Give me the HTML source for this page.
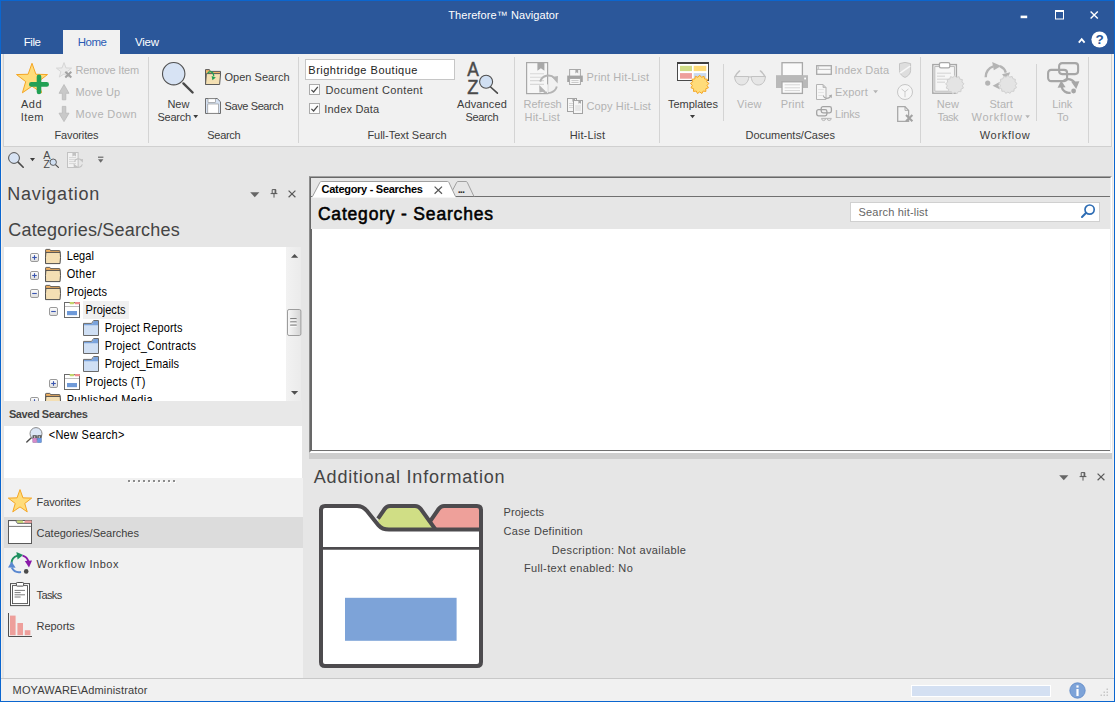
<!DOCTYPE html>
<html lang="en"><head><meta charset="utf-8"><title>Therefore™ Navigator</title>
<style>
html,body{margin:0;padding:0;background:#ffffff;}
body{width:1116px;height:703px;overflow:hidden;position:relative;font-family:"Liberation Sans",sans-serif;}
#root{position:absolute;left:0;top:0;width:1116px;height:703px;overflow:hidden;}
#root div,#root svg,#root span{position:absolute;box-sizing:border-box;}
.t{white-space:pre;}
svg{overflow:visible;}
</style></head><body><div id="root">
<div class="window" style="left:0px;top:0px;width:1115px;height:702px;background:#e6e6e6;border:1px solid #0b66cf;"></div>
<div class="titlebar" style="left:1px;top:1px;width:1113px;height:53px;background:#2b579a;"></div>
<div class="tab-home" style="left:63px;top:30px;width:57px;height:24px;background:#f1f1f1;"></div>
<div style="left:1px;top:54px;width:1px;height:647px;background:#f6f0ea;"></div>
<div style="left:1113px;top:54px;width:1px;height:647px;background:#f6f0ea;"></div>
<div style="left:2px;top:54px;width:1110px;height:93px;background:#e8e8e8;"></div>
<div class="ribbon" style="left:3px;top:54px;width:1109px;height:93px;background:#f1f1f1;border-left:1px solid #d2d2d2;border-right:1px solid #d2d2d2;border-bottom:1px solid #d0d0d0;"></div>
<div style="left:1112px;top:54px;width:1px;height:93px;background:#f6f0ea;"></div>
<div style="left:148px;top:57px;width:1px;height:86px;background:#d4d4d4;"></div>
<div style="left:298px;top:57px;width:1px;height:86px;background:#d4d4d4;"></div>
<div style="left:514px;top:57px;width:1px;height:86px;background:#d4d4d4;"></div>
<div style="left:659px;top:57px;width:1px;height:86px;background:#d4d4d4;"></div>
<div style="left:920px;top:57px;width:1px;height:86px;background:#d4d4d4;"></div>
<div style="left:1088px;top:57px;width:1px;height:86px;background:#d4d4d4;"></div>
<div style="left:723px;top:64px;width:1px;height:57px;background:#d4d4d4;"></div>
<div style="left:1036px;top:64px;width:1px;height:57px;background:#d4d4d4;"></div>
<div style="left:305px;top:59px;width:150px;height:21px;background:#ffffff;border:1px solid #c6c6c6;"></div>
<div class="tree" style="left:4px;top:247px;width:282px;height:154px;background:#ffffff;overflow:hidden;"><div style="left:79px;top:54px;width:46px;height:18px;background:#f0f0f0;"></div>
<svg class="exp" style="left:26px;top:6px" width="9" height="9" viewBox="0 0 9 9"><defs><linearGradient id="eg" x1="0" y1="0" x2="0" y2="1"><stop offset="0" stop-color="#ffffff"/><stop offset="1" stop-color="#dcdcdc"/></linearGradient></defs><rect x="0.5" y="0.5" width="8" height="8" rx="1.4" fill="url(#eg)" stroke="#9a9a9a"/><path d="M2.2 4.5H6.8" stroke="#3a55b0" stroke-width="1.1"/><path d="M4.5 2.2V6.8" stroke="#3a55b0" stroke-width="1.1"/></svg>
<svg class="folder" style="left:41px;top:2px" width="16" height="15" viewBox="0 0 16 15"><path d="M0.6 14.4V0.9Q0.6 0.4 1.2 0.4H4.6Q5.2 0.4 5.4 1L5.6 1.6H14.4Q15 1.6 15 2.2V4" fill="#f0b060" stroke="#4f4f4f" stroke-width="0.9"/><path d="M0.6 14.6Q0.2 8 0.9 3.4H15.2Q15.9 8 15 14.6Z" fill="#f4dfb4" stroke="#4f4f4f" stroke-width="1" stroke-linejoin="round"/></svg>
<svg class="exp" style="left:26px;top:24px" width="9" height="9" viewBox="0 0 9 9"><defs><linearGradient id="eg" x1="0" y1="0" x2="0" y2="1"><stop offset="0" stop-color="#ffffff"/><stop offset="1" stop-color="#dcdcdc"/></linearGradient></defs><rect x="0.5" y="0.5" width="8" height="8" rx="1.4" fill="url(#eg)" stroke="#9a9a9a"/><path d="M2.2 4.5H6.8" stroke="#3a55b0" stroke-width="1.1"/><path d="M4.5 2.2V6.8" stroke="#3a55b0" stroke-width="1.1"/></svg>
<svg class="folder" style="left:41px;top:20px" width="16" height="15" viewBox="0 0 16 15"><path d="M0.6 14.4V0.9Q0.6 0.4 1.2 0.4H4.6Q5.2 0.4 5.4 1L5.6 1.6H14.4Q15 1.6 15 2.2V4" fill="#f0b060" stroke="#4f4f4f" stroke-width="0.9"/><path d="M0.6 14.6Q0.2 8 0.9 3.4H15.2Q15.9 8 15 14.6Z" fill="#f4dfb4" stroke="#4f4f4f" stroke-width="1" stroke-linejoin="round"/></svg>
<svg class="exp" style="left:26px;top:42px" width="9" height="9" viewBox="0 0 9 9"><defs><linearGradient id="eg" x1="0" y1="0" x2="0" y2="1"><stop offset="0" stop-color="#ffffff"/><stop offset="1" stop-color="#dcdcdc"/></linearGradient></defs><rect x="0.5" y="0.5" width="8" height="8" rx="1.4" fill="url(#eg)" stroke="#9a9a9a"/><path d="M2.2 4.5H6.8" stroke="#3a55b0" stroke-width="1.1"/></svg>
<svg class="folder" style="left:41px;top:38px" width="16" height="15" viewBox="0 0 16 15"><path d="M0.6 14.4V0.9Q0.6 0.4 1.2 0.4H4.6Q5.2 0.4 5.4 1L5.6 1.6H14.4Q15 1.6 15 2.2V4" fill="#f0b060" stroke="#4f4f4f" stroke-width="0.9"/><path d="M0.6 14.6Q0.2 8 0.9 3.4H15.2Q15.9 8 15 14.6Z" fill="#f4dfb4" stroke="#4f4f4f" stroke-width="1" stroke-linejoin="round"/></svg>
<svg class="exp" style="left:26px;top:150px" width="9" height="9" viewBox="0 0 9 9"><defs><linearGradient id="eg" x1="0" y1="0" x2="0" y2="1"><stop offset="0" stop-color="#ffffff"/><stop offset="1" stop-color="#dcdcdc"/></linearGradient></defs><rect x="0.5" y="0.5" width="8" height="8" rx="1.4" fill="url(#eg)" stroke="#9a9a9a"/><path d="M2.2 4.5H6.8" stroke="#3a55b0" stroke-width="1.1"/><path d="M4.5 2.2V6.8" stroke="#3a55b0" stroke-width="1.1"/></svg>
<svg class="folder" style="left:41px;top:146px" width="16" height="15" viewBox="0 0 16 15"><path d="M0.6 14.4V0.9Q0.6 0.4 1.2 0.4H4.6Q5.2 0.4 5.4 1L5.6 1.6H14.4Q15 1.6 15 2.2V4" fill="#f0b060" stroke="#4f4f4f" stroke-width="0.9"/><path d="M0.6 14.6Q0.2 8 0.9 3.4H15.2Q15.9 8 15 14.6Z" fill="#f4dfb4" stroke="#4f4f4f" stroke-width="1" stroke-linejoin="round"/></svg>
<svg class="exp" style="left:45px;top:60px" width="9" height="9" viewBox="0 0 9 9"><defs><linearGradient id="eg" x1="0" y1="0" x2="0" y2="1"><stop offset="0" stop-color="#ffffff"/><stop offset="1" stop-color="#dcdcdc"/></linearGradient></defs><rect x="0.5" y="0.5" width="8" height="8" rx="1.4" fill="url(#eg)" stroke="#9a9a9a"/><path d="M2.2 4.5H6.8" stroke="#3a55b0" stroke-width="1.1"/></svg>
<svg class="case" style="left:60px;top:55px" width="16" height="16" viewBox="0 0 16 16"><rect x="0.5" y="0.5" width="15" height="15" fill="#ffffff" stroke="#6a6a6a"/><rect x="5.6" y="0" width="4.6" height="2.2" rx="0.8" fill="#c3d66e"/><rect x="10.6" y="0" width="5.4" height="2.2" rx="0.8" fill="#ee9090"/><path d="M1 4.5H15" stroke="#bdbdbd" stroke-width="1"/><rect x="3" y="9" width="10" height="4.2" fill="#6f9ad8"/></svg>
<svg class="exp" style="left:45px;top:132px" width="9" height="9" viewBox="0 0 9 9"><defs><linearGradient id="eg" x1="0" y1="0" x2="0" y2="1"><stop offset="0" stop-color="#ffffff"/><stop offset="1" stop-color="#dcdcdc"/></linearGradient></defs><rect x="0.5" y="0.5" width="8" height="8" rx="1.4" fill="url(#eg)" stroke="#9a9a9a"/><path d="M2.2 4.5H6.8" stroke="#3a55b0" stroke-width="1.1"/><path d="M4.5 2.2V6.8" stroke="#3a55b0" stroke-width="1.1"/></svg>
<svg class="case" style="left:60px;top:127px" width="16" height="16" viewBox="0 0 16 16"><rect x="0.5" y="0.5" width="15" height="15" fill="#ffffff" stroke="#6a6a6a"/><rect x="5.6" y="0" width="4.6" height="2.2" rx="0.8" fill="#c3d66e"/><rect x="10.6" y="0" width="5.4" height="2.2" rx="0.8" fill="#ee9090"/><path d="M1 4.5H15" stroke="#bdbdbd" stroke-width="1"/><rect x="3" y="9" width="10" height="4.2" fill="#6f9ad8"/></svg>
<svg class="cat" style="left:79px;top:73px" width="16" height="16" viewBox="0 0 16 16"><path d="M0.5 15.5V3.4H8.6L10.6 0.5H15.5V15.5Z" fill="#cfdff4" stroke="#6a6a6a" stroke-linejoin="round"/><path d="M1 3.9H8.9L10.9 1H15V5.2H1Z" fill="#7aa3dc"/></svg>
<svg class="cat" style="left:79px;top:91px" width="16" height="16" viewBox="0 0 16 16"><path d="M0.5 15.5V3.4H8.6L10.6 0.5H15.5V15.5Z" fill="#cfdff4" stroke="#6a6a6a" stroke-linejoin="round"/><path d="M1 3.9H8.9L10.9 1H15V5.2H1Z" fill="#7aa3dc"/></svg>
<svg class="cat" style="left:79px;top:109px" width="16" height="16" viewBox="0 0 16 16"><path d="M0.5 15.5V3.4H8.6L10.6 0.5H15.5V15.5Z" fill="#cfdff4" stroke="#6a6a6a" stroke-linejoin="round"/><path d="M1 3.9H8.9L10.9 1H15V5.2H1Z" fill="#7aa3dc"/></svg>
<span class="t" style="left:62.70px;top:3px;font-size:11px;line-height:12px;color:#000000;letter-spacing:0.08px;transform:scaleY(1.125);transform-origin:0 10px;">Legal</span>
<span class="t" style="left:62.70px;top:21px;font-size:11px;line-height:12px;color:#000000;letter-spacing:0.36px;transform:scaleY(1.125);transform-origin:0 10px;">Other</span>
<span class="t" style="left:62.70px;top:39px;font-size:11px;line-height:12px;color:#000000;letter-spacing:0.07px;transform:scaleY(1.125);transform-origin:0 10px;">Projects</span>
<span class="t" style="left:81.60px;top:57px;font-size:11px;line-height:12px;color:#000000;letter-spacing:0.02px;transform:scaleY(1.125);transform-origin:0 10px;">Projects</span>
<span class="t" style="left:100.70px;top:75px;font-size:11px;line-height:12px;color:#000000;letter-spacing:0.14px;transform:scaleY(1.125);transform-origin:0 10px;">Project Reports</span>
<span class="t" style="left:100.70px;top:93px;font-size:11px;line-height:12px;color:#000000;letter-spacing:0.25px;transform:scaleY(1.125);transform-origin:0 10px;">Project_Contracts</span>
<span class="t" style="left:100.70px;top:111px;font-size:11px;line-height:12px;color:#000000;letter-spacing:0.07px;transform:scaleY(1.125);transform-origin:0 10px;">Project_Emails</span>
<span class="t" style="left:81.60px;top:129px;font-size:11px;line-height:12px;color:#000000;letter-spacing:0.27px;transform:scaleY(1.125);transform-origin:0 10px;">Projects (T)</span>
<span class="t" style="left:62.70px;top:147px;font-size:11px;line-height:12px;color:#000000;letter-spacing:0.33px;transform:scaleY(1.125);transform-origin:0 10px;">Published Media</span>
</div>
<div class="vscroll" style="left:286px;top:247px;width:15px;height:154px;background:linear-gradient(90deg,#f2f2f2,#ebebeb);"></div>
<div style="left:4px;top:401px;width:298px;height:25px;background:#e8e8e8;"></div>
<div class="saved" style="left:4px;top:426px;width:298px;height:52px;background:#ffffff;"></div>
<div class="navbuttons" style="left:4px;top:478px;width:299px;height:200px;background:#f1f1f1;"></div>
<div style="left:4px;top:517px;width:299px;height:31px;background:#dcdcdc;"></div>
<div class="content" style="left:309px;top:176px;width:803px;height:277px;background:#ffffff;border-top:1px solid #a0a0a0;border-left:1px solid #8c8c8c;border-right:1px solid #ffffff;border-bottom:1px solid #ffffff;"></div>
<div style="left:310px;top:177px;width:801px;height:275px;background:#ffffff;border-top:1px solid #686868;border-left:1px solid #686868;border-right:1px solid #f0f0f0;border-bottom:1px solid #fbfbfb;"></div>
<div style="left:311px;top:178px;width:799px;height:51px;background:#e6e6e6;"></div>
<div style="left:311px;top:196px;width:799px;height:1px;background:#707070;"></div>
<div style="left:311px;top:229px;width:1px;height:222px;background:#686868;"></div>
<div style="left:311px;top:450px;width:799px;height:1px;background:#707070;"></div>
<div style="left:850px;top:202px;width:250px;height:20px;background:#ffffff;border:1px solid #d0d0d0;"></div>
<div style="left:309px;top:453px;width:803px;height:6px;background:#cdcdcd;"></div>
<div style="left:1px;top:678px;width:1113px;height:1px;background:#c8c8c8;"></div>
<div class="statusbar" style="left:1px;top:679px;width:1113px;height:22px;background:#f1f1f1;"></div>
<div style="left:911px;top:685px;width:140px;height:12px;background:#d4e0f2;border:1px solid #ffffff;"></div>
<svg class="ico-add" style="left:16px;top:62px" width="34" height="34" viewBox="0 0 34 34"><polygon points="16.00,1.30 19.88,12.26 31.50,12.56 22.28,19.64 25.58,30.79 16.00,24.20 6.42,30.79 9.72,19.64 0.50,12.56 12.12,12.26" fill="#ffdc7a" stroke="#f5a623" stroke-width="1" stroke-linejoin="miter"/><path d="M15.3 22.4H30.7M23 14.8V30" stroke="#21a055" stroke-width="4.6" stroke-linecap="round" fill="none"/></svg>
<svg style="left:56px;top:62px" width="17" height="17" viewBox="0 0 17 17"><polygon points="8.00,0.60 9.94,5.93 15.61,6.13 11.14,9.62 12.70,15.07 8.00,11.90 3.30,15.07 4.86,9.62 0.39,6.13 6.06,5.93" fill="#ebebeb" stroke="#d6d6d6" stroke-width="1"/><path d="M9.3 9.8L15.3 15.4M15.3 9.8L9.3 15.4" stroke="#a3a3a3" stroke-width="2.1" fill="none"/></svg>
<svg style="left:58px;top:84px" width="12" height="16" viewBox="0 0 12 16"><path d="M6 0.5L11 9.3H7.8V15.8H4.3V9.3H1Z" fill="#c9c9c9" stroke="#b9b9b9" stroke-width="0.8" stroke-linejoin="round"/></svg>
<svg style="left:58px;top:106px" width="12" height="16" viewBox="0 0 12 16"><path d="M6 15.6L11 7.2H7.8V0.4H4.3V7.2H1Z" fill="#c9c9c9" stroke="#b9b9b9" stroke-width="0.8" stroke-linejoin="round"/></svg>
<svg class="ico-search" style="left:160px;top:60px" width="36" height="36" viewBox="0 0 36 36"><line x1="23.4" y1="23.4" x2="32.6" y2="32.5" stroke="#4a4a4a" stroke-width="2.4" stroke-linecap="round"/><circle cx="13.7" cy="13.7" r="11.2" fill="#d7e3f4" stroke="#505050" stroke-width="1.1"/></svg>
<svg style="left:193px;top:115px" width="6" height="4" viewBox="0 0 6 4"><polygon points="0.3,0 5.1,0 2.6999999999999997,3.2" fill="#3c3c3c"/></svg>
<svg class="ico-open" style="left:205px;top:69px" width="17" height="17" viewBox="0 0 17 17"><path d="M0.5 15.5V0.6H4.4L5.4 2.4H15.5V6" fill="#f0b368" stroke="#5a5a5a" stroke-width="1" stroke-linejoin="round"/><path d="M0.5 15.5H14.6L15.6 4.6H1.4Z" fill="#f4e0b3" stroke="#5a5a5a" stroke-width="1" stroke-linejoin="round"/><path d="M2.6 4.6C4 1.8 8.4 1.8 8.8 7.2" fill="none" stroke="#21a055" stroke-width="1.2"/><polygon points="6.6,7 10.8,8.6 7.4,11.2" fill="#21a055"/></svg>
<svg class="ico-save" style="left:205px;top:98px" width="17" height="17" viewBox="0 0 17 17"><path d="M0.5 0.5H12.2L15.5 3.8V15.5H0.5Z" fill="#d6e2f3" stroke="#6e6e6e" stroke-width="1" stroke-linejoin="round"/><rect x="3" y="0.8" width="7.4" height="3.6" fill="#ffffff" stroke="#8a8a8a" stroke-width="0.6"/><rect x="2.8" y="6" width="10.6" height="9.2" fill="#ffffff" stroke="#8a8a8a" stroke-width="0.6"/></svg>
<svg class="chk" style="left:309px;top:84px" width="11" height="11" viewBox="0 0 11 11"><rect x="0.5" y="0.5" width="10" height="10" fill="#fdfdfd" stroke="#ababab"/><path d="M2.4 5.8L4.6 8L8.8 2.8" fill="none" stroke="#4a4a4a" stroke-width="1.2"/></svg>
<svg class="chk" style="left:309px;top:103px" width="11" height="11" viewBox="0 0 11 11"><rect x="0.5" y="0.5" width="10" height="10" fill="#fdfdfd" stroke="#ababab"/><path d="M2.4 5.8L4.6 8L8.8 2.8" fill="none" stroke="#4a4a4a" stroke-width="1.2"/></svg>
<svg class="ico-adv" style="left:466px;top:60px" width="34" height="36" viewBox="0 0 34 36"><text x="7" y="16.3" font-size="19.4" text-anchor="middle" fill="#4a4a4a" stroke="#4a4a4a" stroke-width="0.45" font-family="Liberation Sans, sans-serif" textLength="11.6" lengthAdjust="spacingAndGlyphs">A</text><text x="6.8" y="33.9" font-size="20.2" text-anchor="middle" fill="#4a4a4a" stroke="#4a4a4a" stroke-width="0.45" font-family="Liberation Sans, sans-serif" textLength="11.2" lengthAdjust="spacingAndGlyphs">Z</text><line x1="24.6" y1="27" x2="31.4" y2="33.2" stroke="#4a4a4a" stroke-width="1.6" stroke-linecap="round"/><circle cx="20.1" cy="21.7" r="6.5" fill="#d0dff2" stroke="#505050" stroke-width="1.1"/></svg>
<svg class="ico-refresh" style="left:526px;top:62px" width="34" height="33" viewBox="0 0 34 33"><rect x="0.6" y="0.6" width="21" height="31" fill="#f6f6f6" stroke="#a8a8a8" stroke-width="1.2"/><path d="M11.4 0.6H18.4V8.8L14.9 6.2L11.4 8.8Z" fill="#a8a8a8"/><path d="M4 11.7H18M4 15.2H18M4 18.6H18M4 22.4H18" stroke="#d8d8d8" stroke-width="1.1"/><path d="M14.2 19.6A8.6 8.6 0 0 1 28.6 16.2" fill="none" stroke="#b4b4b4" stroke-width="1.9"/><path d="M30.8 24.6A8.6 8.6 0 0 1 16.6 28.6" fill="none" stroke="#b4b4b4" stroke-width="1.9"/><path d="M21.6 22.4V31" stroke="#f0f0f0" stroke-width="1"/><polygon points="26,15 32,14 31.6,21.4" fill="#b4b4b4"/><polygon points="13.2,23 13.4,30.4 19.6,29.2" fill="#b4b4b4"/></svg>
<svg style="left:567px;top:69px" width="16" height="16" viewBox="0 0 16 16"><rect x="2.6" y="0.5" width="10.8" height="7" fill="#f6f6f6" stroke="#a8a8a8"/><path d="M8.4 0.5H11.2V4.4L9.8 3.3L8.4 4.4Z" fill="#a8a8a8"/><rect x="0.2" y="6.6" width="15.6" height="6.4" fill="#a3a3a3"/><rect x="2.6" y="9.5" width="10.8" height="6" fill="#f9f9f9" stroke="#a8a8a8"/><path d="M4.4 11.6H11.6M4.4 13.5H11.6" stroke="#c4c4c4" stroke-width="0.9"/></svg>
<svg style="left:567px;top:98px" width="16" height="16" viewBox="0 0 16 16"><rect x="0.5" y="0.5" width="9" height="13" fill="#f6f6f6" stroke="#a3a3a3"/><path d="M5.4 0.5H8V3.8L6.7 2.9L5.4 3.8Z" fill="#a8a8a8"/><path d="M2 5.5H6M2 7.5H6M2 9.5H6" stroke="#d4d4d4" stroke-width="0.9"/><rect x="6.5" y="2.5" width="9" height="13" fill="#f6f6f6" stroke="#a3a3a3"/><path d="M11.4 2.5H14V5.8L12.7 4.9L11.4 5.8Z" fill="#a8a8a8"/><path d="M8.2 8H13.8M8.2 10H13.8M8.2 12H13.8" stroke="#d4d4d4" stroke-width="0.9"/></svg>
<svg class="ico-templates" style="left:677px;top:62px" width="34" height="34" viewBox="0 0 34 34"><rect x="0.5" y="0.5" width="31" height="18" fill="#ffffff" stroke="#4a4a4a"/><rect x="0" y="0" width="32" height="2" fill="#3f3f3f"/><rect x="3" y="3.8" width="12" height="5.3" fill="#cfdc86"/><rect x="16.7" y="3.8" width="12.6" height="5.3" fill="#ffdb77"/><rect x="3" y="11.1" width="12" height="5.6" fill="#ee9f9b"/><rect x="16.7" y="11.1" width="12.6" height="5.6" fill="#c9daf0"/><polygon points="22.70,13.20 24.47,15.32 27.02,14.27 27.61,16.96 30.35,17.22 29.62,19.88 31.93,21.38 30.05,23.39 31.40,25.80 28.79,26.70 28.87,29.46 26.14,29.05 24.93,31.53 22.70,29.90 20.47,31.53 19.26,29.05 16.53,29.46 16.61,26.70 14.00,25.80 15.35,23.39 13.47,21.38 15.78,19.88 15.05,17.22 17.79,16.96 18.38,14.27 20.93,15.32" fill="#ffdc7a" stroke="#f5a623" stroke-width="1" stroke-linejoin="round"/></svg>
<svg style="left:690px;top:115px" width="6" height="4" viewBox="0 0 6 4"><polygon points="0,0 5,0 2.5,3.2" fill="#3c3c3c"/></svg>
<svg style="left:734px;top:70px" width="32" height="16" viewBox="0 0 32 16"><path d="M1 6.6Q2.6 3.4 5.6 0.9M31 6.6Q29.4 3.4 26.4 0.9" stroke="#c2c2c2" stroke-width="1.4" fill="none" stroke-linecap="round"/><path d="M0.6 6.5H14.8C14.6 11.6 11.8 15 7.7 15C3.6 15 0.8 11.6 0.6 6.5Z" fill="#e6e6e6" stroke="#c2c2c2"/><path d="M17.2 6.5H31.4C31.2 11.6 28.4 15 24.3 15C20.2 15 17.4 11.6 17.2 6.5Z" fill="#e6e6e6" stroke="#c2c2c2"/><path d="M14.6 7.2Q16 6.2 17.4 7.2" stroke="#c2c2c2" fill="none"/></svg>
<svg style="left:776px;top:62px" width="32" height="32" viewBox="0 0 32 32"><rect x="6" y="0.7" width="20.4" height="13.4" fill="#fafafa" stroke="#a8a8a8" stroke-width="1.3"/><rect x="0" y="13.2" width="32" height="12.8" fill="#b9b9b9"/><rect x="28.2" y="15.6" width="1.8" height="1.8" fill="#ffffff"/><rect x="6" y="19.8" width="20.4" height="11.6" fill="#fbfbfb" stroke="#a8a8a8" stroke-width="1.3"/><path d="M8.6 22.8H24M8.6 25.8H24M8.6 28.6H24" stroke="#d6d6d6" stroke-width="1"/></svg>
<svg style="left:816px;top:65px" width="16" height="10" viewBox="0 0 16 10"><rect x="0.7" y="0.7" width="14.6" height="8.6" fill="#f8f8f8" stroke="#a8a8a8" stroke-width="1.3"/><path d="M1 4.4H15" stroke="#b8b8b8" stroke-width="0.9"/><path d="M2.6 1.4V4" stroke="#b8b8b8" stroke-width="0.8"/></svg>
<svg style="left:816px;top:84px" width="16" height="16" viewBox="0 0 16 16"><path d="M0.5 0.5H7L10 3.5V15.5H0.5Z" fill="#f6f6f6" stroke="#b4b4b4"/><path d="M7 0.5V3.5H10" fill="#c8c8c8" stroke="#b4b4b4" stroke-width="0.8"/><path d="M2.2 5.5H7.8M2.2 8.5H7.8M2.2 11.5H6" stroke="#dcdcdc" stroke-width="0.7"/><path d="M7 11.4C8.4 15.2 12.4 15.2 14.6 12.4" fill="none" stroke="#a8a8a8" stroke-width="1.1"/><polygon points="12.8,11.6 16,10.4 15.6,14.2" fill="#a8a8a8"/></svg>
<svg style="left:816px;top:106px" width="16" height="16" viewBox="0 0 16 16"><rect x="5.2" y="0.7" width="10.2" height="6.2" rx="1.8" fill="none" stroke="#a3a3a3" stroke-width="1.3"/><rect x="0.7" y="3.6" width="10.2" height="6.2" rx="1.8" fill="none" stroke="#a3a3a3" stroke-width="1.3"/><path d="M5.4 12.4H15.4M5.6 12.4A2 2.2 0 0 0 9.6 12.4M11.2 12.4A2 2.2 0 0 0 15.2 12.4" fill="#e6e6e6" stroke="#b4b4b4" stroke-width="0.9"/></svg>
<svg style="left:873px;top:90px" width="6" height="4" viewBox="0 0 6 4"><polygon points="0.2,0.3 5.0,0.3 2.6,3.3" fill="#b4b4b4"/></svg>
<svg style="left:899px;top:62px" width="12" height="16" viewBox="0 0 12 16"><path d="M0.5 1.6L6 0.4L11.6 1.6V8.6C11.6 12 8.6 14.4 6 15.4C3.4 14.4 0.5 12 0.5 8.6Z" fill="#dedede" stroke="#c4c4c4"/><path d="M1 11.2L11.2 4.2" stroke="#f8f8f8" stroke-width="1.5"/></svg>
<svg style="left:897px;top:84px" width="16" height="16" viewBox="0 0 16 16"><circle cx="8" cy="8" r="7.5" fill="#f6f6f6" stroke="#c6c6c6"/><path d="M4.6 5L8 7.8L11.4 5M8 7.8V13.2" fill="none" stroke="#cccccc" stroke-width="1"/></svg>
<svg style="left:897px;top:106px" width="17" height="17" viewBox="0 0 17 17"><path d="M0.7 0.7H8L11.6 4.4V15.3H0.7Z" fill="#f4f4f4" stroke="#a8a8a8" stroke-width="1.3"/><path d="M8 0.7V4.4H11.6" fill="none" stroke="#a8a8a8" stroke-width="0.9"/><path d="M9 9L15.4 15.2M15.4 9L9 15.2" stroke="#a3a3a3" stroke-width="2.1" fill="none"/></svg>
<svg style="left:932px;top:62px" width="34" height="34" viewBox="0 0 34 34"><rect x="0.8" y="2.6" width="23.6" height="28.6" fill="#fbfbfb" stroke="#a8a8a8" stroke-width="1.4"/><rect x="2.8" y="4.6" width="19.6" height="24.6" fill="#f6f6f6" stroke="#b4b4b4" stroke-width="0.9"/><rect x="7.4" y="0.6" width="10.4" height="5.2" rx="1.6" fill="#ffffff" stroke="#a8a8a8" stroke-width="1.3"/><path d="M5 11.2H19M5 14.2H13M5 17.2H19M5 20.2H13" stroke="#dedede" stroke-width="1.6"/><polygon points="22.80,13.60 24.62,15.42 27.08,14.65 27.84,17.11 30.37,17.57 29.91,20.11 31.93,21.69 30.34,23.72 31.40,26.06 29.05,27.12 28.90,29.69 26.33,29.53 25.00,31.73 22.80,30.40 20.60,31.73 19.27,29.53 16.70,29.69 16.55,27.12 14.20,26.06 15.26,23.72 13.67,21.69 15.69,20.11 15.23,17.57 17.76,17.11 18.52,14.65 20.98,15.42" fill="#e4e4e4" stroke="#d0d0d0" stroke-width="1" stroke-linejoin="round"/></svg>
<svg style="left:984px;top:62px" width="34" height="34" viewBox="0 0 34 34"><path d="M1.7 15.2A10.6 10.6 0 0 1 9.4 4.4" fill="none" stroke="#b4b4b4" stroke-width="2.4"/><polygon points="8.2,0 17.2,4 9.8,8.2" fill="#b4b4b4"/><path d="M16 4.2A10.6 10.6 0 0 1 21.8 10.6" fill="none" stroke="#b4b4b4" stroke-width="2.4"/><polygon points="18,12.2 26.2,10.2 23,18" fill="#b4b4b4"/><circle cx="3.7" cy="21.1" r="2.6" fill="#b4b4b4"/><polygon points="8.6,23.8 16,19.8 14.4,23.8 16,27.6" fill="#b4b4b4"/><polygon points="23.90,13.40 25.72,15.12 28.13,14.44 28.94,16.81 31.39,17.33 31.01,19.81 32.93,21.40 31.44,23.42 32.41,25.73 30.15,26.82 29.93,29.31 27.43,29.23 26.08,31.34 23.90,30.10 21.72,31.34 20.37,29.23 17.87,29.31 17.65,26.82 15.39,25.73 16.36,23.42 14.87,21.40 16.79,19.81 16.41,17.33 18.86,16.81 19.67,14.44 22.08,15.12" fill="#e4e4e4" stroke="#d0d0d0" stroke-width="1" stroke-linejoin="round"/></svg>
<svg style="left:1025px;top:115px" width="6" height="4" viewBox="0 0 6 4"><polygon points="0.3,0.2 4.8999999999999995,0.2 2.5999999999999996,3.2" fill="#b4b4b4"/></svg>
<svg style="left:1047px;top:62px" width="34" height="34" viewBox="0 0 34 34"><rect x="12.1" y="1.1" width="19" height="11" rx="3" fill="none" stroke="#a6a6a6" stroke-width="2.1"/><rect x="1.1" y="7.9" width="19" height="11.2" rx="3" fill="none" stroke="#a6a6a6" stroke-width="2.1"/><path d="M16.6 18.8A7.4 7.4 0 0 1 28 21.6" fill="none" stroke="#a6a6a6" stroke-width="2.3"/><polygon points="24.2,19.8 32.4,19.2 29.2,27" fill="#a6a6a6"/><path d="M14.6 24.4A7.4 7.4 0 0 0 23.6 30.6" fill="none" stroke="#a6a6a6" stroke-width="2.3"/><polygon points="10.6,25.8 14.2,18.6 18.6,25.2" fill="#a6a6a6"/><circle cx="26.6" cy="29" r="2.4" fill="#a6a6a6"/></svg>
<svg style="left:1020px;top:15px" width="8" height="4" viewBox="0 0 8 4"><rect x="0.6" y="0.6" width="6.6" height="2.6" fill="#ffffff"/></svg>
<svg style="left:1055px;top:10px" width="9" height="10" viewBox="0 0 9 10"><rect x="0.5" y="1" width="8" height="8" fill="none" stroke="#ffffff"/><rect x="0" y="0" width="9" height="2" fill="#ffffff"/></svg>
<svg style="left:1090px;top:10.5px" width="9" height="8" viewBox="0 0 9 8"><path d="M0.6 0.4L7.8 7.4M7.8 0.4L0.6 7.4" stroke="#ffffff" stroke-width="1.4" fill="none"/></svg>
<svg style="left:1078px;top:37px" width="8" height="7" viewBox="0 0 8 7"><path d="M0.8 5.6L3.7 2.2L6.6 5.6" stroke="#ffffff" stroke-width="1.8" fill="none"/></svg>
<svg class="help" style="left:1091px;top:31px" width="17" height="17" viewBox="0 0 17 17"><circle cx="8.5" cy="8.5" r="8.1" fill="#ffffff"/><text x="8.6" y="13.4" font-size="13.5" font-weight="700" text-anchor="middle" fill="#2b579a" font-family="Liberation Sans, sans-serif">?</text></svg>
<svg style="left:8px;top:152px" width="16" height="16" viewBox="0 0 16 16"><line x1="9.6" y1="9.6" x2="15.2" y2="15.2" stroke="#4a4a4a" stroke-width="1.6" stroke-linecap="round"/><circle cx="6" cy="6" r="5.4" fill="#d7e3f4" stroke="#505050" stroke-width="1"/></svg>
<svg style="left:30px;top:158px" width="6" height="4" viewBox="0 0 6 4"><polygon points="0,0 5,0 2.5,3.2" fill="#3c3c3c"/></svg>
<svg style="left:43px;top:152px" width="16" height="16" viewBox="0 0 16 16"><text x="3.8" y="7.2" font-size="10.8" text-anchor="middle" fill="#4a4a4a" font-family="Liberation Sans, sans-serif">A</text><text x="3.6" y="15.8" font-size="10.4" text-anchor="middle" fill="#4a4a4a" font-family="Liberation Sans, sans-serif">Z</text><line x1="12.2" y1="12.4" x2="15.4" y2="15.4" stroke="#4a4a4a" stroke-width="1.2" stroke-linecap="round"/><circle cx="10.2" cy="10.2" r="3.2" fill="#d0dff2" stroke="#505050" stroke-width="0.9"/></svg>
<svg style="left:67px;top:152px" width="16" height="16" viewBox="0 0 16 16"><rect x="0.5" y="0.5" width="10.6" height="15" fill="#f2f2f2" stroke="#c2c2c2"/><path d="M5.4 0.5H9V4.6L7.2 3.4L5.4 4.6Z" fill="#c2c2c2"/><path d="M2 5.6H9M2 7.6H9M2 9.6H9M2 11.6H9" stroke="#d2d2d2" stroke-width="0.9"/><path d="M7.4 9.6A4.2 4.2 0 0 1 14.6 8.4" fill="none" stroke="#c2c2c2" stroke-width="1.1"/><path d="M15.4 12.4A4.2 4.2 0 0 1 8.4 14" fill="none" stroke="#c2c2c2" stroke-width="1.1"/><polygon points="12.8,7.4 16,7 15.8,10.8" fill="#c2c2c2"/><polygon points="6.6,11.4 6.8,15.4 10,14.6" fill="#c2c2c2"/></svg>
<svg style="left:98px;top:155.6px" width="6" height="8" viewBox="0 0 6 8"><rect x="0" y="0.6" width="5.4" height="1.2" fill="#6a6a6a"/><polygon points="0,3.2 5.4,3.2 2.7,6.800000000000001" fill="#6a6a6a"/></svg>
<svg style="left:250px;top:191.6px" width="10" height="6" viewBox="0 0 10 6"><polygon points="0.2,0.2 9.399999999999999,0.2 4.8,5.2" fill="#666666"/></svg>
<svg style="left:269.5px;top:189.2px" width="8" height="9" viewBox="0 0 8 9"><path d="M2.2 0.6H5.8V4.4H2.2ZM0.6 4.6H7.4M4 4.6V8.6" fill="none" stroke="#5a5a5a" stroke-width="1"/><path d="M5.2 0.6V4.4" stroke="#5a5a5a" stroke-width="1.2"/></svg>
<svg style="left:288px;top:190px" width="8" height="8" viewBox="0 0 8 8"><path d="M0.6 0.6L7.4 7.2M7.4 0.6L0.6 7.2" stroke="#5a5a5a" stroke-width="1.2" fill="none"/></svg>
<svg style="left:1058.8px;top:474.6px" width="10" height="6" viewBox="0 0 10 6"><polygon points="0.2,0.2 9.399999999999999,0.2 4.8,5.2" fill="#666666"/></svg>
<svg style="left:1078.6px;top:472.2px" width="8" height="9" viewBox="0 0 8 9"><path d="M2.2 0.6H5.8V4.4H2.2ZM0.6 4.6H7.4M4 4.6V8.6" fill="none" stroke="#5a5a5a" stroke-width="1"/><path d="M5.2 0.6V4.4" stroke="#5a5a5a" stroke-width="1.2"/></svg>
<svg style="left:1097px;top:473.2px" width="8" height="8" viewBox="0 0 8 8"><path d="M0.6 0.6L7.4 7.2M7.4 0.6L0.6 7.2" stroke="#5a5a5a" stroke-width="1.2" fill="none"/></svg>
<svg style="left:291px;top:254px" width="8" height="4" viewBox="0 0 8 4"><polygon points="0,3.8 3.6,0 7.2,3.8" fill="#505050"/></svg>
<svg style="left:291px;top:391px" width="8" height="4" viewBox="0 0 8 4"><polygon points="0,0 7.2,0 3.6,3.8" fill="#505050"/></svg>
<svg class="thumb" style="left:286.5px;top:309px" width="15" height="27" viewBox="0 0 15 27"><defs><linearGradient id="tg" x1="0" y1="0" x2="1" y2="0"><stop offset="0" stop-color="#f8f8f8"/><stop offset="1" stop-color="#d4d4d4"/></linearGradient></defs><rect x="0.5" y="0.5" width="13.4" height="26" rx="1.6" fill="url(#tg)" stroke="#9c9c9c"/><path d="M3.2 9.8H9.6M3.2 13H9.6M3.2 16.2H9.6" stroke="#555555" stroke-width="1"/><path d="M3.2 10.8H9.6M3.2 14H9.6M3.2 17.2H9.6" stroke="#ffffff" stroke-width="1"/></svg>
<svg style="left:26px;top:427px" width="17" height="17" viewBox="0 0 17 17"><line x1="0.8" y1="15" x2="5.6" y2="10.4" stroke="#4a4a4a" stroke-width="1.4" stroke-linecap="round"/><circle cx="10" cy="6.6" r="6" fill="#dbe6f5" stroke="#8a8a8a" stroke-width="1"/><rect x="6.8" y="11" width="4" height="4.6" fill="#d88acb" stroke="#9a72a6" stroke-width="0.5"/><rect x="11.4" y="11" width="4" height="4.6" fill="#6a9ae4" stroke="#5476ad" stroke-width="0.5"/><path d="M6.6 8.2H10.8V11H6.6ZM11.4 8.2H15.6V11H11.4Z" fill="#4a4a4a"/><rect x="7.8" y="9.4" width="1.6" height="1.2" fill="#ffffff"/><rect x="12.6" y="9.4" width="1.6" height="1.2" fill="#ffffff"/></svg>
<svg class="dots" style="left:128px;top:480px" width="50" height="4" viewBox="0 0 50 4"><rect x="1" y="1" width="2" height="2" fill="#ffffff"/><rect x="0" y="0" width="2" height="2" fill="#8c8c8c"/><rect x="6" y="1" width="2" height="2" fill="#ffffff"/><rect x="5" y="0" width="2" height="2" fill="#8c8c8c"/><rect x="11" y="1" width="2" height="2" fill="#ffffff"/><rect x="10" y="0" width="2" height="2" fill="#8c8c8c"/><rect x="16" y="1" width="2" height="2" fill="#ffffff"/><rect x="15" y="0" width="2" height="2" fill="#8c8c8c"/><rect x="21" y="1" width="2" height="2" fill="#ffffff"/><rect x="20" y="0" width="2" height="2" fill="#8c8c8c"/><rect x="26" y="1" width="2" height="2" fill="#ffffff"/><rect x="25" y="0" width="2" height="2" fill="#8c8c8c"/><rect x="31" y="1" width="2" height="2" fill="#ffffff"/><rect x="30" y="0" width="2" height="2" fill="#8c8c8c"/><rect x="36" y="1" width="2" height="2" fill="#ffffff"/><rect x="35" y="0" width="2" height="2" fill="#8c8c8c"/><rect x="41" y="1" width="2" height="2" fill="#ffffff"/><rect x="40" y="0" width="2" height="2" fill="#8c8c8c"/><rect x="46" y="1" width="2" height="2" fill="#ffffff"/><rect x="45" y="0" width="2" height="2" fill="#8c8c8c"/></svg>
<svg style="left:8px;top:489px" width="24" height="24" viewBox="0 0 24 24"><polygon points="12.00,0.60 14.94,8.85 23.70,9.10 16.76,14.45 19.23,22.85 12.00,17.90 4.77,22.85 7.24,14.45 0.30,9.10 9.06,8.85" fill="#ffdc7a" stroke="#f5a623" stroke-width="1"/></svg>
<svg style="left:8px;top:520px" width="24" height="24" viewBox="0 0 24 24"><rect x="0.5" y="0.5" width="23" height="23" fill="#ffffff" stroke="#5a5a5a"/><path d="M8.4 0.4H14.6L15.8 3H9.6Z" fill="#cbdc7c"/><path d="M17 0.4H23.6V3H16Z" fill="#f0a0a0"/><path d="M0.6 0.6H7.6L9.4 3.4H23.4" fill="none" stroke="#5a5a5a" stroke-width="0.9"/><path d="M1 6.4H23" stroke="#6a6a6a" stroke-width="0.9"/></svg>
<svg style="left:8px;top:552px" width="24" height="24" viewBox="0 0 24 24"><path d="M3.4 11.6A8.4 8.4 0 0 1 9.6 3.6" fill="none" stroke="#1f9060" stroke-width="2"/><polygon points="8.4,0 15.2,3 9.6,7.6" fill="#1f9060"/><path d="M14.6 3.6A8.4 8.4 0 0 1 20.4 9.4" fill="none" stroke="#8a1aa8" stroke-width="2"/><polygon points="16.8,9 24,8.6 21,15.4" fill="#8a1aa8"/><path d="M13 20A8.4 8.4 0 0 1 3.8 15.6" fill="none" stroke="#5a88d0" stroke-width="2"/><polygon points="0,15.6 3.6,9.4 7.6,15.8" fill="#5a88d0"/><circle cx="18.2" cy="19.4" r="2.3" fill="#4a4a4a"/></svg>
<svg style="left:10px;top:582px" width="20" height="24" viewBox="0 0 20 24"><rect x="0.5" y="1.6" width="19" height="22" fill="#ffffff" stroke="#4f4f4f"/><rect x="2.5" y="3.6" width="15" height="18" fill="#ffffff" stroke="#4f4f4f" stroke-width="0.9"/><rect x="6.4" y="0.5" width="7.2" height="3.6" rx="0.8" fill="#ffffff" stroke="#4f4f4f"/><path d="M4.6 8.4H15M4.6 10.6H10.6M4.6 12.8H15M4.6 15H10.6" stroke="#5a5a5a" stroke-width="0.8"/></svg>
<svg style="left:8px;top:613px" width="24" height="24" viewBox="0 0 24 24"><rect x="2" y="2.6" width="5.6" height="19.6" fill="#ee9f9b"/><rect x="9.4" y="10" width="5.6" height="12.2" fill="#ee9f9b"/><rect x="16.8" y="17.2" width="5.6" height="5" fill="#ee9f9b"/><path d="M0.5 0V23.5H24" fill="none" stroke="#4f4f4f" stroke-width="1"/></svg>
<svg class="tabs" style="left:312px;top:181px" width="163" height="17" viewBox="0 0 163 17"><path d="M0.5 15.5L8 1.2Q8.4 0.5 9.2 0.5H135.6Q136.4 0.5 136.8 1.2L143.5 15.5Z" fill="#ffffff" stroke="none"/><rect x="0.5" y="15" width="143" height="1.6" fill="#ffffff"/><path d="M0.5 15.5L8 1.2Q8.4 0.5 9.2 0.5H135.6Q136.4 0.5 136.8 1.2L143.5 15.5" fill="none" stroke="#a0a0a0" stroke-width="1"/><path d="M140.6 9.2L144.8 1.2Q145.2 0.5 146 0.5H154Q154.8 0.5 155.2 1.2L162 15.5" fill="none" stroke="#a0a0a0" stroke-width="1"/></svg>
<svg style="left:434px;top:185.6px" width="9" height="9" viewBox="0 0 9 9"><path d="M0.6 0.6L8 7.8M8 0.6L0.6 7.8" stroke="#555555" stroke-width="1.2" fill="none"/></svg>
<svg style="left:1081px;top:204px" width="14" height="14" viewBox="0 0 14 14"><circle cx="8.6" cy="5.6" r="4.6" fill="none" stroke="#2e6db4" stroke-width="1.7"/><line x1="5.2" y1="8.8" x2="1" y2="13" stroke="#2e6db4" stroke-width="2" stroke-linecap="round"/></svg>
<svg class="bigicon" style="left:319px;top:504px" width="164" height="164" viewBox="0 0 164 164"><path d="M2 6Q2 2 6 2H38Q44 2 48 7L59.6 21.4Q63.2 25.6 70 25.6H162V158Q162 162 158 162H6Q2 162 2 158Z" fill="#ffffff"/><path d="M59 14.6L65.6 5Q67.6 2 71 2H96Q99.6 2 101.8 5L116.4 25.6H70Q63.2 25.6 59.6 21.4Z" fill="#d0de85"/><path d="M111.6 16.6L119.6 5Q121.8 2 125 2H162V25.6H117.4Z" fill="#eea09a"/><path d="M2 44.4H162" stroke="#4d4b4e" stroke-width="2.8"/><path d="M59 14.6L65.6 5Q67.6 2 71 2H96Q99.6 2 101.8 5L116.6 25.6" fill="none" stroke="#4d4b4e" stroke-width="4" stroke-linejoin="round"/><path d="M2 6Q2 2 6 2H38Q44 2 48 7L59.6 21.4Q63.2 25.6 70 25.6H162" fill="none" stroke="#4d4b4e" stroke-width="4" stroke-linejoin="round"/><path d="M2 6V158Q2 162 6 162H158Q162 162 162 158V6Q162 2 158 2H125Q121.8 2 119.6 5L111.6 16.6" fill="none" stroke="#4d4b4e" stroke-width="4" stroke-linejoin="round"/><rect x="26" y="93.8" width="111.6" height="43" fill="#7da3d8"/></svg>
<svg style="left:1068.5px;top:681.5px" width="17" height="17" viewBox="0 0 17 17"><circle cx="8.5" cy="8.5" r="7.7" fill="#7da3d8" stroke="#5b86c6" stroke-width="0.8"/><rect x="7.4" y="3.4" width="2.2" height="2.2" fill="#ffffff"/><rect x="7.4" y="7" width="2.2" height="7" fill="#ffffff"/></svg>
<svg style="left:1100px;top:688px" width="9" height="9" viewBox="0 0 9 9"><rect x="6.6" y="0.6" width="1.2" height="1.2" fill="#b0b0b0"/><rect x="3.6" y="3.6" width="1.2" height="1.2" fill="#b0b0b0"/><rect x="6.6" y="3.6" width="1.2" height="1.2" fill="#b0b0b0"/><rect x="0.6" y="6.6" width="1.2" height="1.2" fill="#b0b0b0"/><rect x="3.6" y="6.6" width="1.2" height="1.2" fill="#b0b0b0"/><rect x="6.6" y="6.6" width="1.2" height="1.2" fill="#b0b0b0"/></svg>
<span class="t" style="left:448.20px;top:9px;font-size:11px;line-height:12px;color:#ffffff;letter-spacing:0.09px;">Therefore™ Navigator</span>
<span class="t" style="left:23.70px;top:36px;font-size:11.5px;line-height:12px;color:#ffffff;letter-spacing:-0.41px;">File</span>
<span class="t" style="left:77.70px;top:36px;font-size:11.5px;line-height:12px;color:#2b5cb4;letter-spacing:-0.49px;">Home</span>
<span class="t" style="left:135.00px;top:36px;font-size:11.5px;line-height:12px;color:#ffffff;letter-spacing:-0.24px;">View</span>
<span class="t" style="left:21.00px;top:98px;font-size:11px;line-height:12px;color:#3c3c3c;letter-spacing:0.52px;">Add</span>
<span class="t" style="left:20.70px;top:111px;font-size:11px;line-height:12px;color:#3c3c3c;letter-spacing:0.42px;">Item</span>
<span class="t" style="left:75.50px;top:64px;font-size:11px;line-height:12px;color:#b3b3b3;letter-spacing:-0.17px;">Remove Item</span>
<span class="t" style="left:75.50px;top:86px;font-size:11px;line-height:12px;color:#b3b3b3;letter-spacing:0.1px;">Move Up</span>
<span class="t" style="left:75.50px;top:108px;font-size:11px;line-height:12px;color:#b3b3b3;letter-spacing:0.38px;">Move Down</span>
<span class="t" style="left:54.50px;top:129px;font-size:11px;line-height:12px;color:#3c3c3c;letter-spacing:-0.15px;">Favorites</span>
<span class="t" style="left:167.50px;top:98px;font-size:11px;line-height:12px;color:#3c3c3c;letter-spacing:-0.08px;">New</span>
<span class="t" style="left:157.50px;top:111px;font-size:11px;line-height:12px;color:#3c3c3c;letter-spacing:-0.25px;">Search</span>
<span class="t" style="left:224.50px;top:71px;font-size:11px;line-height:12px;color:#3c3c3c;letter-spacing:0.02px;">Open Search</span>
<span class="t" style="left:224.50px;top:100px;font-size:11px;line-height:12px;color:#3c3c3c;letter-spacing:-0.39px;">Save Search</span>
<span class="t" style="left:207.30px;top:129px;font-size:11px;line-height:12px;color:#3c3c3c;letter-spacing:-0.29px;">Search</span>
<span class="t" style="left:308.30px;top:64px;font-size:11px;line-height:12px;color:#222222;letter-spacing:0.5px;">Brightridge Boutique</span>
<span class="t" style="left:325.40px;top:84px;font-size:11px;line-height:12px;color:#3c3c3c;letter-spacing:0.37px;">Document Content</span>
<span class="t" style="left:324.30px;top:103px;font-size:11px;line-height:12px;color:#3c3c3c;letter-spacing:0.19px;">Index Data</span>
<span class="t" style="left:367.40px;top:129px;font-size:11px;line-height:12px;color:#3c3c3c;letter-spacing:-0.02px;">Full-Text Search</span>
<span class="t" style="left:457.00px;top:98px;font-size:11px;line-height:12px;color:#3c3c3c;letter-spacing:0.13px;">Advanced</span>
<span class="t" style="left:465.50px;top:111px;font-size:11px;line-height:12px;color:#3c3c3c;letter-spacing:-0.35px;">Search</span>
<span class="t" style="left:523.60px;top:98px;font-size:11px;line-height:12px;color:#b3b3b3;letter-spacing:-0.07px;">Refresh</span>
<span class="t" style="left:524.60px;top:111px;font-size:11px;line-height:12px;color:#b3b3b3;letter-spacing:0.13px;">Hit-List</span>
<span class="t" style="left:586.50px;top:71px;font-size:11px;line-height:12px;color:#b3b3b3;letter-spacing:0.2px;">Print Hit-List</span>
<span class="t" style="left:586.50px;top:100px;font-size:11px;line-height:12px;color:#b3b3b3;letter-spacing:0.12px;">Copy Hit-List</span>
<span class="t" style="left:569.70px;top:129px;font-size:11px;line-height:12px;color:#3c3c3c;letter-spacing:0.15px;">Hit-List</span>
<span class="t" style="left:668.00px;top:98px;font-size:11px;line-height:12px;color:#3c3c3c;letter-spacing:-0.03px;">Templates</span>
<span class="t" style="left:737.00px;top:98px;font-size:11px;line-height:12px;color:#b3b3b3;letter-spacing:0.3px;">View</span>
<span class="t" style="left:780.70px;top:98px;font-size:11px;line-height:12px;color:#b3b3b3;letter-spacing:0.18px;">Print</span>
<span class="t" style="left:834.50px;top:64px;font-size:11px;line-height:12px;color:#b3b3b3;letter-spacing:0.15px;">Index Data</span>
<span class="t" style="left:835.00px;top:86px;font-size:11px;line-height:12px;color:#b3b3b3;letter-spacing:0.19px;">Export</span>
<span class="t" style="left:835.00px;top:108px;font-size:11px;line-height:12px;color:#b3b3b3;letter-spacing:-0.17px;">Links</span>
<span class="t" style="left:745.50px;top:129px;font-size:11px;line-height:12px;color:#3c3c3c;letter-spacing:-0.03px;">Documents/Cases</span>
<span class="t" style="left:936.70px;top:98px;font-size:11px;line-height:12px;color:#b3b3b3;letter-spacing:0.12px;">New</span>
<span class="t" style="left:937.40px;top:111px;font-size:11px;line-height:12px;color:#b3b3b3;letter-spacing:-0.51px;">Task</span>
<span class="t" style="left:989.50px;top:98px;font-size:11px;line-height:12px;color:#b3b3b3;letter-spacing:0.01px;">Start</span>
<span class="t" style="left:971.50px;top:111px;font-size:11px;line-height:12px;color:#b3b3b3;letter-spacing:0.77px;">Workflow</span>
<span class="t" style="left:1052.30px;top:98px;font-size:11px;line-height:12px;color:#b3b3b3;letter-spacing:-0.06px;">Link</span>
<span class="t" style="left:1057.00px;top:111px;font-size:11px;line-height:12px;color:#b3b3b3;letter-spacing:0.0px;">To</span>
<span class="t" style="left:979.70px;top:129px;font-size:11px;line-height:12px;color:#3c3c3c;letter-spacing:0.72px;">Workflow</span>
<span class="t" style="left:7.30px;top:184px;font-size:18px;line-height:20px;color:#444444;letter-spacing:0.76px;">Navigation</span>
<span class="t" style="left:8.30px;top:220px;font-size:18px;line-height:20px;color:#444444;letter-spacing:0.18px;">Categories/Searches</span>
<span class="t" style="left:8.90px;top:408px;font-size:11px;line-height:12px;color:#444444;letter-spacing:-0.42px;font-weight:700;">Saved Searches</span>
<span class="t" style="left:48.70px;top:429px;font-size:11px;line-height:12px;color:#000000;letter-spacing:0.27px;transform:scaleY(1.125);transform-origin:0 10px;">&lt;New Search&gt;</span>
<span class="t" style="left:36.60px;top:496px;font-size:11px;line-height:12px;color:#3c3c3c;letter-spacing:-0.12px;">Favorites</span>
<span class="t" style="left:36.60px;top:527px;font-size:11px;line-height:12px;color:#3c3c3c;letter-spacing:-0.02px;">Categories/Searches</span>
<span class="t" style="left:36.60px;top:558px;font-size:11px;line-height:12px;color:#3c3c3c;letter-spacing:0.53px;">Workflow Inbox</span>
<span class="t" style="left:36.60px;top:589px;font-size:11px;line-height:12px;color:#3c3c3c;letter-spacing:-0.63px;">Tasks</span>
<span class="t" style="left:36.60px;top:620px;font-size:11px;line-height:12px;color:#3c3c3c;letter-spacing:-0.05px;">Reports</span>
<span class="t" style="left:12.60px;top:684px;font-size:11px;line-height:12px;color:#3c3c3c;letter-spacing:0.15px;">MOYAWARE\Administrator</span>
<span class="t" style="left:321.50px;top:183px;font-size:11px;line-height:12px;color:#000000;letter-spacing:-0.28px;font-weight:700;">Category - Searches</span>
<span class="t" style="left:457.70px;top:183px;font-size:11px;line-height:12px;color:#333333;letter-spacing:-0.96px;font-weight:700;">...</span>
<span class="t" style="left:317.90px;top:204px;font-size:17.5px;line-height:20px;color:#000000;letter-spacing:0.81px;-webkit-text-stroke:0.55px #000;">Category - Searches</span>
<span class="t" style="left:858.50px;top:206px;font-size:11px;line-height:12px;color:#666666;letter-spacing:0.19px;">Search hit-list</span>
<span class="t" style="left:313.80px;top:467px;font-size:18px;line-height:20px;color:#444444;letter-spacing:0.79px;">Additional Information</span>
<span class="t" style="left:503.50px;top:506px;font-size:11px;line-height:12px;color:#444444;letter-spacing:0.12px;">Projects</span>
<span class="t" style="left:503.50px;top:525px;font-size:11px;line-height:12px;color:#444444;letter-spacing:0.33px;">Case Definition</span>
<span class="t" style="left:551.70px;top:544px;font-size:11px;line-height:12px;color:#444444;letter-spacing:0.38px;">Description: Not available</span>
<span class="t" style="left:523.90px;top:562px;font-size:11px;line-height:12px;color:#444444;letter-spacing:0.37px;">Full-text enabled: No</span>
</div></body></html>
